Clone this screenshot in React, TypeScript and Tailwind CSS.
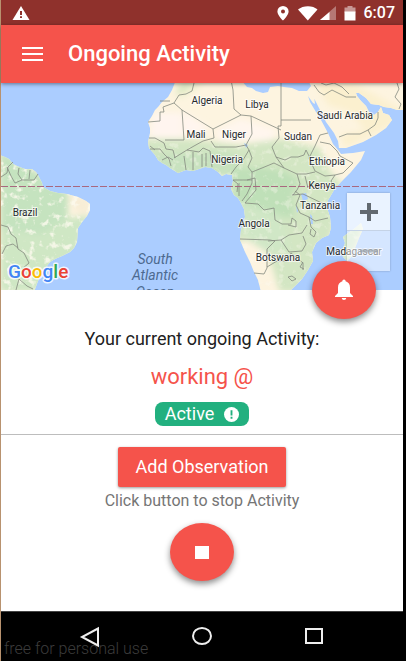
import React from "react";

const AFRICA =
  "M176 80 L172 90 L168 97 L162 102 L158 107 L155 110 L152 116 L148 122 L150 128 L150 133 L148 142 L149 148 L155 155 L158 160 L162 163 L166 165 L170 168 L178 173 L186 170 L193 171 L205 167 L212 168 L218 172 L222 176 L226 174 L232 175 L233 181 L231 189 L234 195 L238 198 L241 203 L244 209 L245 217 L241 230 L240 240 L245 252 L250 262 L254 272 L258 280 L261 292 L289 292 L296 285 L302 279 L308 270 L313 261 L312 252 L316 243 L322 238 L329 235 L331 228 L330 217 L327 208 L328 200 L330 197 L334 190 L338 185 L351 172 L361 160 L365 151 L353 153 L341 154 L338 150 L333 144 L328 133 L321 120 L316 112 L310 102 L308 96 L313 103 L315 104 L314 96 L320 83 L320 80 L311 80 L311 86 L307 91 L299 91 L292 88 L284 87 L278 86 L270 87 L268 92 L263 93 L256 91 L252 88 L247 87 L241 80 Z";
const ARABIA =
  "M308 80 L313 90 L314 98 L319 108 L326 122 L334 133 L338 141 L339 148 L346 148 L363 142 L376 135 L386 128 L392 120 L389 115 L383 113 L381 107 L378 112 L374 115 L369 112 L366 106 L361 101 L357 96 L356 93 L359 93 L366 98 L371 104 L379 105 L384 107 L391 108 L397 110 L406 110 L406 80 Z";
const SOUTH_AMERICA =
  "M0 155 L5 157 L9 159 L13 164 L17 166 L25 169 L32 169 L36 172 L38 175 L42 183 L43 187 L50 191 L58 193 L67 194 L78 197 L86 201 L90 204 L90 210 L87 216 L82 222 L78 228 L77 242 L74 248 L70 252 L62 256 L55 259 L50 262 L46 267 L42 273 L38 281 L34 292 L0 292 Z";
const MADAGASCAR =
  "M361 223 L363 229 L359 238 L355 248 L351 257 L347 261 L343 257 L342 251 L345 243 L343 237 L348 233 L354 229 Z";

const BORDERS = [
  "M194 83 L192 91 L186 94 L179 95 L174 103 L163 107 L164 112 L160 112 L160 121 L148 122",
  "M170 101 H160",
  "M174 103 L182 110 L213 129 L241 115",
  "M182 110 L184 140 H165",
  "M231 80 L233 90 L234 109 L241 115 L251 116 L281 130",
  "M213 129 L214 138 L203 141 L194 146 L187 150",
  "M251 116 L252 134 L246 145 L236 147 L215 147 L211 141",
  "M149 138 L155 138 L164 143 L166 149 L173 150 L175 158",
  "M150 149 L160 149 L164 154 L169 159 L171 166",
  "M155 150 L150 146",
  "M174 158 L187 150 L199 152 L203 148 L210 151 L212 167",
  "M193 152 L193 170 M202 154 L202 167 M206 153 L206 166",
  "M184 156 L186 170 M162 160 L168 157 L173 160",
  "M246 145 L249 150 L243 160 L236 167 L231 174",
  "M249 150 L252 158 L248 167 L252 172",
  "M252 172 L262 168 L274 163 L284 168",
  "M233 180 H252 M233 180 L238 184 L237 192",
  "M252 172 L252 183 L247 194 L242 201",
  "M239 183 L239 196 M247 180 L255 178 L256 190 L245 203",
  "M281 83 V126 H278 L279 138",
  "M281 120 H311",
  "M279 138 L272 147 L276 157 L285 160 L291 157 L298 157 L304 155 L306 150 L310 158",
  "M276 157 L284 168 L297 174 L306 174 L315 172",
  "M328 133 L320 135 L315 146 L309 158 L315 171 L325 176 L335 175",
  "M320 142 L330 144 L337 151 L340 156 L353 163 L343 173 L335 175",
  "M297 174 L300 184 L297 190 L293 195",
  "M335 175 L331 181 L334 188 M305 176 L308 188",
  "M292 195 L303 194 L328 206",
  "M295 191 L300 195 L296 205 L300 213 L309 217",
  "M245 203 L258 204 L264 210 L274 208 L275 220 L282 224 L291 224 L292 218 L296 221 L296 227 L288 225",
  "M309 217 L315 221 L328 218",
  "M309 217 L311 227 L316 232 L314 237 L310 234 L311 229",
  "M240 239 L270 240 L275 241 L267 249 L267 268 L264 274 L254 273",
  "M268 241 L281 240 L289 235 L302 233 L307 225",
  "M281 240 L289 252 L302 251 L306 244 L303 236",
  "M267 267 L277 261 L287 261 L291 253 L303 263 L303 270",
  "M303 262 L300 267 L304 269 M292 276 L296 279 L292 281 L288 277 Z",
  "M314 85 L319 92 L324 95 L332 90 L346 97 L356 97",
  "M321 83 L326 85 L334 83 L342 87 L349 94",
  "M397 83 L399 89 L395 97 L401 104 L399 109",
  "M339 137 L347 134 L360 134 L368 130 L371 136",
  "M368 130 L375 125 L378 118 L378 112",
  "M1 177 L7 173 L8 167 L13 162",
  "M7 167 L11 176 L15 183 L22 180 L34 180 L38 174",
  "M19 168 L18 174 L22 180 M30 170 L29 179",
  "M1 225 L8 227 L11 234 L16 238 L18 249 L24 253 L29 263 L22 269",
  "M2 254 L6 246 L13 244 L18 248",
  "M16 290 L19 279 L27 286 L33 289",
];

const COUNTRIES: [string, number, number][] = [
  ["Algeria", 207, 104],
  ["Libya", 257, 108],
  ["Saudi Arabia", 345, 119],
  ["Mali", 196, 138],
  ["Niger", 234, 138],
  ["Sudan", 298, 140],
  ["Nigeria", 227, 163],
  ["Ethiopia", 327, 165],
  ["Kenya", 322, 189],
  ["Tanzania", 320, 209],
  ["Angola", 254, 227],
  ["Botswana", 278, 261],
  ["Madagascar", 354, 255],
  ["Brazil", 25, 216],
];

const GOOGLE: [string, string][] = [
  ["G", "#4285f4"],
  ["o", "#ea4335"],
  ["o", "#fbbc05"],
  ["g", "#4285f4"],
  ["l", "#34a853"],
  ["e", "#ea4335"],
];

function WorldMap() {
  return (
    <svg
      className="block h-full w-full"
      viewBox="1 83 402 207"
      preserveAspectRatio="xMidYMid slice"
      role="img"
      aria-label="Map of Africa and the South Atlantic"
    >
      <defs>
        <clipPath id="land">
          <path d={AFRICA} />
          <path d={ARABIA} />
          <path d={SOUTH_AMERICA} />
          <path d={MADAGASCAR} />
        </clipPath>
        <filter id="soft" x="-20%" y="-20%" width="140%" height="140%">
          <feGaussianBlur stdDeviation="3" />
        </filter>
        <filter id="speckle" x="0" y="0" width="100%" height="100%">
          <feTurbulence type="fractalNoise" baseFrequency="0.14" numOctaves="3" seed="7" />
          <feColorMatrix values="0 0 0 0 0.98  0 0 0 0 0.96  0 0 0 0 0.86  0 5 0 0 -2.75" />
        </filter>
      </defs>
      <rect x="0" y="80" width="406" height="214" fill="#abcdff" />
      <g clipPath="url(#land)">
        <rect x="0" y="80" width="406" height="214" fill="#fdf4e0" />
        <g filter="url(#soft)">
          <path d="M145 139 H190 L240 145 L282 139 L320 148 L330 172 L344 186 L330 240 L310 292 H280 L262 235 L225 245 V180 L145 180 Z" fill="#d3e6c3" />
          <path d="M155 154 L226 152 L243 159 L237 174 L155 178 Z" fill="#c8e2bf" />
          <path d="M232 169 L262 167 L285 171 L299 180 L292 196 L294 218 L268 216 L252 205 L236 202 Z" fill="#bfe0b8" />
          <path d="M235 200 L280 215 L290 250 L268 253 L245 238 Z" fill="#d0e7c6" />
          <path d="M0 150 L50 180 L68 192 L68 225 L40 235 L0 230 Z" fill="#c5e3bf" />
          <path d="M0 230 L40 235 L68 218 L90 215 L75 255 L35 292 H0 Z" fill="#cfe7c4" />
          <path d="M68 194 L92 200 L88 214 L76 212 Z" fill="#f8edd6" />
          <path d="M340 220 L366 220 L350 264 L340 260 Z" fill="#d0e7cc" />
          <path d="M316 84 L355 84 L403 110 L392 125 L345 148 L340 135 L365 130 L350 112 L328 105 Z" fill="#fbf0cf" />
          <path d="M176 83 L205 83 L180 99 Z" fill="#eff0cf" />
          <path d="M183 83 L195 83 L174 96 Z" fill="#cfe3bd" />
          <path d="M184 112 L210 129 L184 137 Z M153 113 L182 113 V138 L150 138 Z" fill="#fff5ef" />
          <path d="M217 130 L240 119 L277 130 L270 141 L219 141 Z" fill="#fff6ee" />
        </g>
        <g filter="url(#speckle)" opacity="0.8">
          <rect x="0" y="150" width="96" height="142" fill="white" />
        </g>
        <g filter="url(#speckle)" opacity="0.35">
          <rect x="148" y="142" width="220" height="150" fill="white" />
        </g>
      </g>
      <g fill="#abcdff">
        <path d="M244 143 L248 145 L246 148 Z" />
        <path d="M301 194 L306 193 L308 199 L303 201 Z" />
        <path d="M310 214 L312 216 L313 224 L311 224 Z" />
        <path d="M296 204 L298 211 L297 213 Z" />
      </g>
      <g fill="none" stroke="#84897f" strokeWidth="0.8" strokeLinejoin="round">
        {BORDERS.map((d) => (
          <path key={d} d={d} />
        ))}
      </g>
      <path d="M1 186.5 H403" stroke="#a9687f" strokeWidth="1" strokeDasharray="7 2" />
      <g
        fontFamily="Roboto, sans-serif"
        fontSize="10"
        fill="#27292b"
        stroke="#ffffffb0"
        strokeWidth="2"
        strokeLinejoin="round"
        paintOrder="stroke"
        textAnchor="middle"
      >
        {COUNTRIES.map(([name, x, y]) => (
          <text key={name} x={x} y={y}>
            {name}
          </text>
        ))}
      </g>
      <g fontFamily="Roboto, sans-serif" fontSize="14" fontStyle="italic" fill="#4d6a90" textAnchor="middle">
        <text x="155" y="264">South</text>
        <text x="155" y="280">Atlantic</text>
        <text x="155" y="297">Ocean</text>
      </g>
      <text
        x="8"
        y="278"
        fontFamily="Roboto, sans-serif"
        fontSize="19"
        fontWeight="500"
        stroke="#ffffffd0"
        strokeWidth="3"
        strokeLinejoin="round"
        paintOrder="stroke"
      >
        {GOOGLE.map(([letter, color], i) => (
          <tspan key={i} fill={color}>
            {letter}
          </tspan>
        ))}
      </text>
    </svg>
  );
}

function StatusBar() {
  return (
    <div className="flex h-[25px] items-center bg-[#8f312c] pr-2 pl-[11px] text-white">
      <svg className="h-[14px] w-[18px]" viewBox="0 0 18 14" aria-hidden="true">
        <path d="M9 0 L17.5 14 H0.5 Z" fill="white" />
        <path d="M8 5 h2 v4 h-2 z M8 10.3 h2 v1.8 h-2 z" fill="#8f312c" />
      </svg>
      <svg className="ml-auto h-4 w-[79px]" viewBox="0 0 79 16" aria-hidden="true">
        <path d="M6 1 a5.6 5.4 0 0 0 -5.6 5.4 C0.4 10 6 15.5 6 15.5 S11.6 10 11.6 6.4 A5.6 5.4 0 0 0 6 1 Z M6 4.4 a2 2 0 1 1 0 4 a2 2 0 0 1 0 -4 Z" fill="white" fillRule="evenodd" />
        <path d="M21 4.5 C26 0 36 0 40.500 4.500 L30.800 15.500 Z" fill="white" />
        <path d="M59 1 V15 H43 Z" fill="white" opacity="0.35" />
        <path d="M52.500 7 V15 H43 Z" fill="white" />
        <path d="M67.500 2.500 h3 v-1.500 h5 v1.500 h3 v5 h-11 z" fill="white" opacity="0.5" />
        <path d="M67.500 6.500 h11 v9 h-11 z" fill="white" />
      </svg>
      <span className="ml-2 text-base leading-6 font-medium">6:07</span>
    </div>
  );
}

export default function App() {
  return (
    <div className="flex min-h-screen flex-col border-r-[3px] border-l border-r-black border-l-[#b8926f] bg-white font-[Roboto,sans-serif]">
      <StatusBar />
      <header className="relative z-10 flex h-[58px] items-center gap-6 bg-[#f5534b] pl-[19px] text-white shadow-[0_1px_4px_rgba(0,0,0,0.45)]">
        <button type="button" aria-label="Open menu" className="h-6 w-6">
          <svg className="h-6 w-6" viewBox="0 0 24 24" aria-hidden="true">
            <path d="M2 6 H23 M2 12 H23 M2 18 H23" stroke="white" strokeWidth="2" />
          </svg>
        </button>
        <h1 className="text-[22px] leading-7 font-medium">Ongoing Activity</h1>
      </header>

      <section className="relative h-[207px]">
        <WorldMap />
        <div className="absolute right-[13px] bottom-[19px] flex w-[43px] flex-col shadow-[0_0_2px_rgba(0,0,0,0.25)]">
          <button type="button" aria-label="Zoom in" className="flex h-[38px] items-center justify-center border-b border-[#c5d3e6] bg-white/75">
            <svg className="h-5 w-5" viewBox="0 0 20 20" aria-hidden="true">
              <path d="M10 1 V19 M1 10 H19" stroke="#626970" strokeWidth="4" />
            </svg>
          </button>
          <button type="button" aria-label="Zoom out" className="flex h-10 items-center justify-center bg-white/50">
            <svg className="h-5 w-5" viewBox="0 0 20 20" aria-hidden="true">
              <path d="M1 10 H19" stroke="#9aa3ab" strokeWidth="3" opacity="0.7" />
            </svg>
          </button>
        </div>
        <button
          type="button"
          aria-label="Notifications"
          className="absolute right-[27px] -bottom-[29px] flex h-[58px] w-16 items-center justify-center rounded-[50%] bg-[#f5534b] shadow-[0_3px_6px_rgba(0,0,0,0.45)]"
        >
          <svg className="h-[22px] w-5" viewBox="0 0 20 22" aria-hidden="true">
            <path d="M10 0.500 C11 0.500 11.600 1.200 11.600 2.300 C14.500 3.200 16 5.500 16 8.500 V14 L19 17 V18 H1 V17 L4 14 V8.500 C4 5.500 5.500 3.200 8.400 2.300 C8.400 1.200 9 0.500 10 0.500 Z M7.800 19 H12.200 C12.200 20.300 11.200 21 10 21 S7.800 20.300 7.800 19 Z" fill="white" />
          </svg>
        </button>
      </section>

      <main className="flex flex-1 flex-col items-center">
        <p className="mt-[37px] text-lg leading-6 text-[#212121]">Your current ongoing Activity:</p>
        <h2 className="mt-3 text-[22px] leading-7 text-[#f5534b]">working @</h2>
        <div className="mt-[11px] flex h-6 items-center gap-[10px] rounded-lg bg-[#22b07f] px-[10px] text-lg leading-6 text-white">
          <span>Active</span>
          <svg className="h-[15px] w-[15px]" viewBox="0 0 16 16" aria-hidden="true">
            <circle cx="8" cy="8" r="8" fill="white" />
            <path d="M7 3.500 h2 v5.500 h-2 z M7 10.500 h2 v2 h-2 z" fill="#22b07f" />
          </svg>
        </div>
        <hr className="mt-2 w-full border-t border-[#bdbdbd]" />
        <button type="button" className="mt-3 h-10 rounded-[2px] bg-[#f5534b] px-[18px] text-lg leading-6 text-white shadow-[0_1px_3px_rgba(0,0,0,0.4)]">
          Add Observation
        </button>
        <p className="mt-1 text-base leading-5 text-[#757575]">Click button to stop Activity</p>
        <button
          type="button"
          aria-label="Stop activity"
          className="mt-3 mb-7 flex h-[58px] w-16 items-center justify-center rounded-[50%] bg-[#f5534b] shadow-[0_3px_6px_rgba(0,0,0,0.45)]"
        >
          <span className="h-[13px] w-[14px] bg-white" />
        </button>
      </main>

      <nav className="relative flex h-[50px] items-center justify-center gap-[88px] border-t border-[#444] bg-black">
        <span className="absolute bottom-0 left-[3px] text-base leading-6 font-light text-[#3c3c3c]">free for personal use</span>
        <button type="button" aria-label="Back" className="relative h-6 w-6">
          <svg className="h-6 w-6" viewBox="0 0 24 24" fill="none" stroke="#eee" strokeWidth="2" aria-hidden="true">
            <path d="M20 3.500 V20.500 L4 12 Z" />
          </svg>
        </button>
        <button type="button" aria-label="Home" className="h-6 w-6">
          <svg className="h-6 w-6" viewBox="0 0 24 24" fill="none" stroke="#eee" strokeWidth="2" aria-hidden="true">
            <ellipse cx="12" cy="11" rx="9" ry="8" />
          </svg>
        </button>
        <button type="button" aria-label="Recent apps" className="h-6 w-6">
          <svg className="h-6 w-6" viewBox="0 0 24 24" fill="none" stroke="#eee" strokeWidth="2" aria-hidden="true">
            <rect x="4" y="4" width="16" height="14" />
          </svg>
        </button>
      </nav>
    </div>
  );
}
